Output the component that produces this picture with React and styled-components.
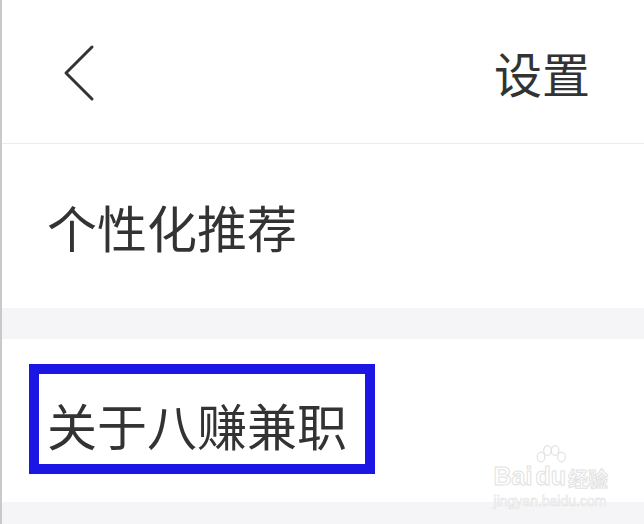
import React from 'react'
import styled, { createGlobalStyle } from 'styled-components'

const GlobalStyle = createGlobalStyle`
    html, body {
        margin: 0;
        padding: 0;
        background: #fff;
    }
    body {
        font-family: "Noto Sans CJK SC", "Noto Sans", sans-serif;
        color: #333;
    }
`;

const Page = styled.div`
    position: relative;
    width: 644px;
    height: 524px;
    overflow: hidden;
    border-left: 2px solid #c9c9c9;
    box-sizing: border-box;
    display: flex;
    flex-direction: column;
    background: #fff;
`;

const Header = styled.header`
    height: 143px;
    flex: none;
    display: flex;
    align-items: center;
    justify-content: space-between;
    padding: 0 54px 0 60px;
    border-bottom: 1px solid #ececec;
    box-sizing: content-box;
`;

const BackButton = styled.button`
    border: none;
    background: none;
    padding: 0;
    margin-top: 2px;
    cursor: pointer;
    display: flex;
`;

const Title = styled.h1`
    margin: 0;
    font-size: 48px;
    font-weight: 400;
    line-height: 1;
    color: #333;
`;

const Row = styled.div`
    height: ${props => props.height}px;
    flex: none;
    display: flex;
    align-items: center;
    padding-left: ${props => props.indent}px;
    font-size: 50px;
    line-height: 1;
    color: #333;
`;

const Gap = styled.div`
    height: ${props => props.height}px;
    flex: none;
    background: #f5f5f7;
`;

const Highlight = styled.span`
    display: inline-block;
    border: 10px solid #1c16e4;
    padding: 25px 18px 15px 8px;
    margin-bottom: 4px;
    background: #fff;
`;

const Watermark = styled.div`
    position: absolute;
    right: 36px;
    bottom: 16px;
    display: flex;
    flex-direction: column;
    align-items: flex-start;
    color: #fff;
    -webkit-text-stroke: 1px #e2e2e2;
    font-family: "Liberation Sans", Arial, sans-serif;
    pointer-events: none;
`;

const MarkLine = styled.div`
    display: flex;
    align-items: flex-end;
    font-size: 25px;
    font-weight: 700;
    line-height: 1;
`;

const MarkCjk = styled.span`
    font-family: "Noto Sans CJK SC", sans-serif;
    font-size: 20px;
    margin-left: 2px;
`;

const MarkUrl = styled.div`
    font-size: 14px;
    line-height: 1;
    margin-top: 5px;
    -webkit-text-stroke: 0.6px #e2e2e2;
`;

const DuWrap = styled.span`
    position: relative;
    margin-left: 3px;
`;

const PawMark = styled.svg`
    position: absolute;
    left: 0;
    top: -19px;
`;

const Chevron = () => (
    <svg width="34" height="60" viewBox="0 0 34 60">
        <polyline
            points="30,4 4,30 30,56"
            fill="none"
            stroke="#333"
            strokeWidth="3"
            strokeLinecap="round"
            strokeLinejoin="round"
        />
    </svg>
);

const Paw = () => (
    <PawMark width="32" height="22" viewBox="0 0 32 22">
        <g fill="#fff" stroke="#e2e2e2" strokeWidth="1.2">
            <ellipse cx="6" cy="12" rx="3.8" ry="4.8" />
            <ellipse cx="12.5" cy="5.5" rx="3.8" ry="4.8" />
            <ellipse cx="20" cy="5.5" rx="3.8" ry="4.8" />
            <ellipse cx="26.5" cy="12" rx="3.8" ry="4.8" />
        </g>
    </PawMark>
);

const App = () => (
    <>
        <GlobalStyle />
        <Page>
            <Header>
                <BackButton aria-label="返回">
                    <Chevron />
                </BackButton>
                <Title>设置</Title>
            </Header>
            <Row height={164} indent={45}>个性化推荐</Row>
            <Gap height={31} />
            <Row height={163} indent={27}>
                <Highlight>关于八赚兼职</Highlight>
            </Row>
            <Gap height={22} />
            <Watermark>
                <MarkLine>
                    Bai
                    <DuWrap>
                        <Paw />
                        du
                    </DuWrap>
                    <MarkCjk>经验</MarkCjk>
                </MarkLine>
                <MarkUrl>jingyan.baidu.com</MarkUrl>
            </Watermark>
        </Page>
    </>
);

export default App
